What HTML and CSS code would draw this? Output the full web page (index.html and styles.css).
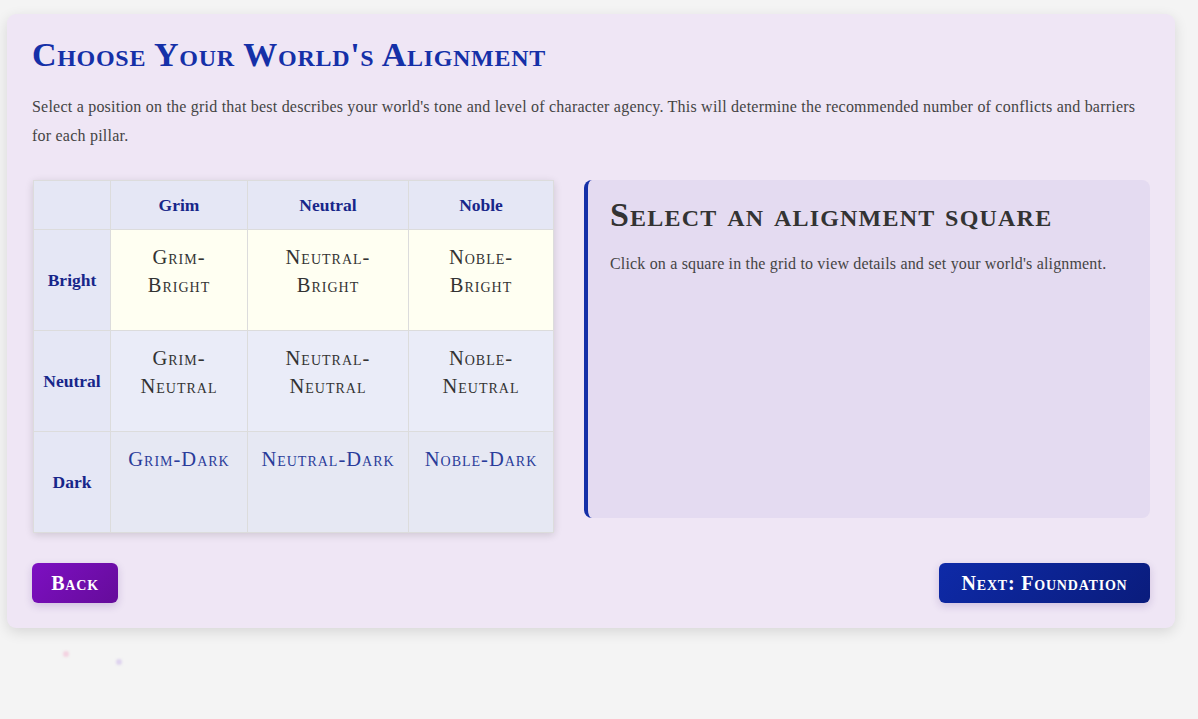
FILE: index.html
```html
<!DOCTYPE html>
<html>
<head>
<meta charset="utf-8">
<link rel="stylesheet" href="styles.css">
</head>
<body>
<main class="card">
  <h1 class="title">Choose Your World's Alignment</h1>
  <p class="intro">Select a position on the grid that best describes your world's tone and level of character agency. This will determine the recommended number of conflicts and barriers for each pillar.</p>
  <section class="layout">
    <table class="grid">
      <colgroup>
        <col class="c-label">
        <col class="c-grim">
        <col class="c-neutral">
        <col class="c-noble">
      </colgroup>
      <thead>
        <tr>
          <th></th>
          <th>Grim</th>
          <th>Neutral</th>
          <th>Noble</th>
        </tr>
      </thead>
      <tbody>
        <tr class="row-bright">
          <th>Bright</th>
          <td>Grim-<br>Bright</td>
          <td>Neutral-<br>Bright</td>
          <td>Noble-<br>Bright</td>
        </tr>
        <tr class="row-neutral">
          <th>Neutral</th>
          <td>Grim-<br>Neutral</td>
          <td>Neutral-<br>Neutral</td>
          <td>Noble-<br>Neutral</td>
        </tr>
        <tr class="row-dark">
          <th>Dark</th>
          <td>Grim-Dark</td>
          <td>Neutral-Dark</td>
          <td>Noble-Dark</td>
        </tr>
      </tbody>
    </table>
    <aside class="details">
      <h2 class="details-title">Select an alignment square</h2>
      <p class="details-text">Click on a square in the grid to view details and set your world's alignment.</p>
    </aside>
  </section>
  <nav class="actions">
    <button class="btn btn-back">Back</button>
    <button class="btn btn-next">Next: Foundation</button>
  </nav>
</main>
<span class="spark spark-pink"></span>
<span class="spark spark-purple"></span>
</body>
</html>
```
FILE: styles.css
```css
html, body {
  margin: 0;
  padding: 0;
}
body {
  background: #f4f4f4;
  font-family: "Liberation Serif", "DejaVu Serif", serif;
  color: #444;
  padding: 14px 23px 0 7px;
  position: relative;
  min-height: 719px;
  box-sizing: border-box;
}
.card {
  background: #efe6f5;
  border-radius: 9px;
  box-shadow: 0 4px 14px rgba(0,0,0,0.12);
  padding: 22px 25px 25px 25px;
}
.title {
  margin: 0;
  font-size: 34px;
  font-weight: bold;
  font-variant: small-caps;
  color: #1530a8;
  letter-spacing: 0.7px;
  line-height: 38px;
}
.intro {
  margin: 18px 0 30px 0;
  font-size: 16px;
  line-height: 29px;
  color: #444;
  letter-spacing: 0.22px;
}
.layout {
  display: grid;
  grid-template-columns: 521px 1fr;
  column-gap: 31px;
  align-items: start;
}
.grid {
  border-collapse: collapse;
  width: 520px;
  box-shadow: 0 2px 8px rgba(0,0,0,0.14);
  table-layout: fixed;
  margin-left: 1px;
}
.c-label { width: 77px; }
.c-grim { width: 137px; }
.c-neutral { width: 161px; }
.c-noble { width: 145px; }
.grid th, .grid td {
  border: 1px solid #dcdcdc;
  text-align: center;
}
.grid thead th {
  height: 48px;
  padding: 0;
  background: #e5e7f5;
  color: #17268a;
  font-size: 17.5px;
  font-weight: bold;
}
.grid tbody th {
  background: #e5e7f5;
  color: #17268a;
  font-size: 17.5px;
  font-weight: bold;
  height: 100px;
  vertical-align: middle;
  padding: 0;
}
.grid tbody td {
  vertical-align: top;
  padding: 13px 2px 0 2px;
  font-size: 20.5px;
  font-variant: small-caps;
  line-height: 28px;
  color: #333;
  letter-spacing: 1px;
}
.grid .row-bright td { background: #fffff2; }
.grid .row-neutral td { background: #eaecf8; }
.grid .row-dark td {
  background: #e6e8f3;
  color: #2a3c9a;
}
.details {
  background: #e4dbf1;
  border-left: 4px solid #1530a8;
  border-radius: 8px;
  height: 338px;
  box-sizing: border-box;
  padding: 16px 22px;
}
.details-title {
  margin: 0;
  font-size: 34px;
  font-variant: small-caps;
  font-weight: bold;
  color: #333;
  line-height: 38px;
  letter-spacing: 1.2px;
}
.details-text {
  margin: 19px 0 0 0;
  font-size: 16px;
  line-height: 22px;
  color: #444;
  letter-spacing: 0.17px;
}
.actions {
  display: flex;
  justify-content: space-between;
  margin-top: 30px;
}
.btn {
  border: none;
  height: 40px;
  border-radius: 6px;
  color: #fff;
  font-family: "Liberation Serif", serif;
  font-weight: bold;
  font-size: 20px;
  font-variant: small-caps;
  letter-spacing: 0.8px;
  padding: 0;
  box-shadow: 0 3px 8px rgba(60,20,120,0.18);
}
.btn-back {
  width: 86px;
  background: linear-gradient(135deg, #7d0fc2, #650c9a);
}
.btn-next {
  width: 211px;
  background: linear-gradient(135deg, #0e2aa8, #0a1c7c);
}
.spark {
  position: absolute;
  width: 6px;
  height: 6px;
  border-radius: 50%;
  filter: blur(1px);
}
.spark-pink {
  left: 63px;
  top: 651px;
  background: rgba(240, 150, 190, 0.35);
}
.spark-purple {
  left: 116px;
  top: 659px;
  background: rgba(180, 150, 230, 0.35);
}
```
